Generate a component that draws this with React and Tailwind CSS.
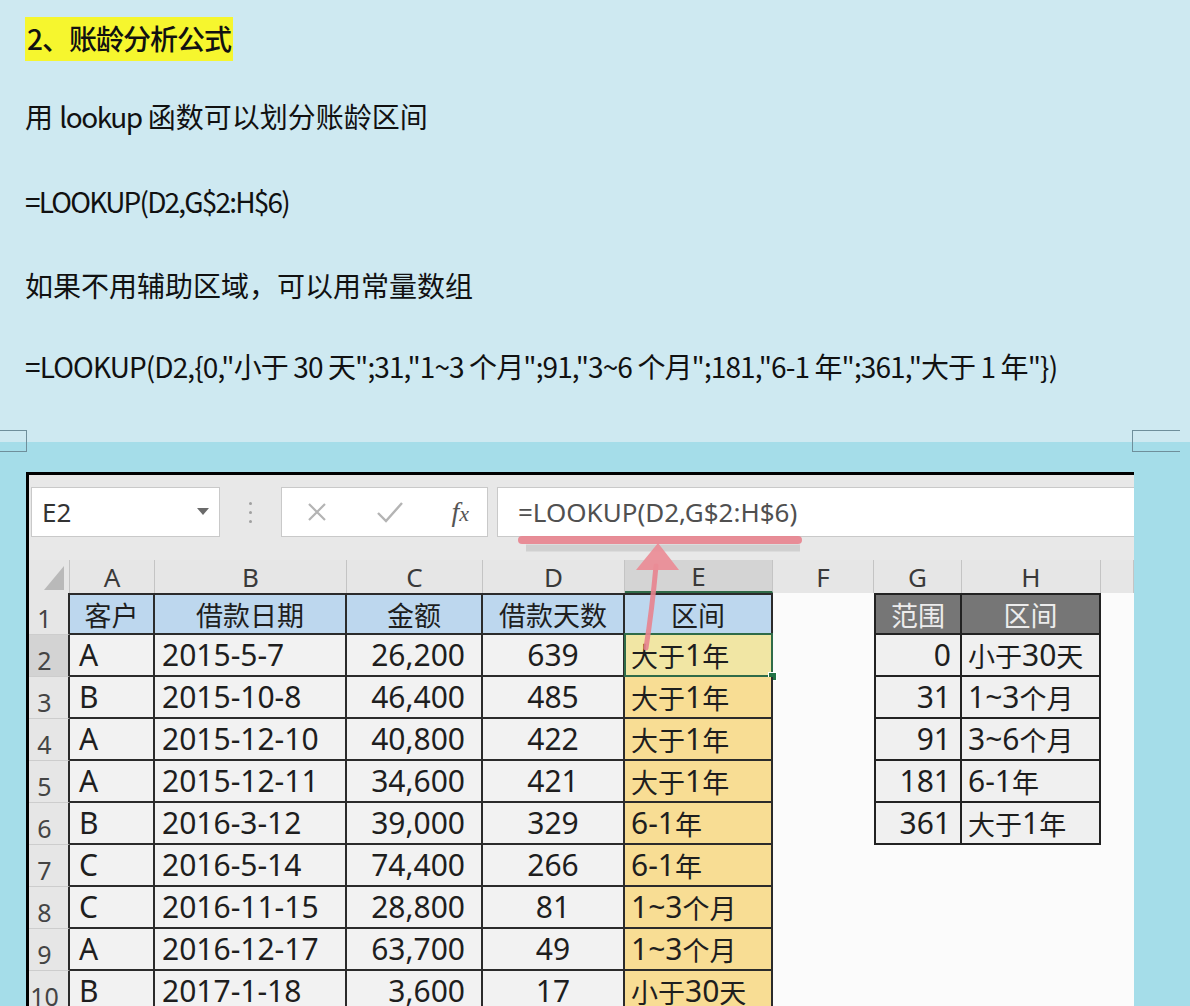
import React from "react";

const CJK = /([\u3000-\u303f\u4e00-\u9fff\uff00-\uffef]+)/;
function Mixed({ text }) {
  return String(text)
    .split(CJK)
    .map((p, i) =>
      p === "" ? null : CJK.test(p) ? (
        <span key={i} className="text-[27px] font-['Noto_Sans_CJK_SC',sans-serif]">
          {p}
        </span>
      ) : (
        <span key={i}>{p}</span>
      )
    );
}

const W = [
  "w-[41px]",
  "w-[85px]",
  "w-[192px]",
  "w-[136px]",
  "w-[142px]",
  "w-[148px]",
  "w-[101px]",
  "w-[88px]",
  "w-[139px]",
  "w-[33px]",
];

const LETTERS = ["", "A", "B", "C", "D", "E", "F", "G", "H", ""];

const DATA = [
  ["A", "2015-5-7", "26,200", "639", "大于1年"],
  ["B", "2015-10-8", "46,400", "485", "大于1年"],
  ["A", "2015-12-10", "40,800", "422", "大于1年"],
  ["A", "2015-12-11", "34,600", "421", "大于1年"],
  ["B", "2016-3-12", "39,000", "329", "6-1年"],
  ["C", "2016-5-14", "74,400", "266", "6-1年"],
  ["C", "2016-11-15", "28,800", "81", "1~3个月"],
  ["A", "2016-12-17", "63,700", "49", "1~3个月"],
  ["B", "2017-1-18", "3,600", "17", "小于30天"],
];

const RANGE = [
  ["0", "小于30天"],
  ["31", "1~3个月"],
  ["91", "3~6个月"],
  ["181", "6-1年"],
  ["361", "大于1年"],
];

const HEAD = ["客户", "借款日期", "金额", "借款天数", "区间"];

const ALIGN = [
  "",
  "justify-start pl-[9px]",
  "justify-start pl-[7px]",
  "justify-end pr-[16px]",
  "justify-center",
  "justify-start pl-[6px]",
];

function ColumnHeader() {
  return (
    <div className="flex h-[33px]">
      {LETTERS.map((l, c) => {
        if (c === 0) {
          return (
            <div key={c} className={`${W[c]} h-full relative bg-[#e6e6e6] border-r border-[#c4c4c4]`}>
              <svg className="absolute right-[5px] bottom-[3px]" width="20" height="24" viewBox="0 0 20 24">
                <polygon points="20,0 20,24 0,24" fill="#b9b9b9" />
              </svg>
            </div>
          );
        }
        const sel = c === 5;
        return (
          <div
            key={c}
            className={`${W[c]} h-full flex items-center justify-center text-[26px] leading-none text-[#3a3a3a] border-r border-[#c4c4c4] ${
              sel ? "bg-[#d4d4d4] border-b-2 border-b-[#2f6b48]" : "bg-[#e6e6e6]"
            }`}
          >
            {l}
          </div>
        );
      })}
    </div>
  );
}

function Row({ r }) {
  const cells = [];
  for (let c = 0; c < 10; c++) {
    if (c === 0) {
      cells.push(
        <div
          key={c}
          className={`${W[c]} h-full flex items-center justify-center pr-[8px] pt-[10px] text-[25px] leading-none text-[#444] border-r-2 border-r-[#2b2b2b] border-b border-b-[#cdcdcd] ${
            r === 2 ? "bg-[#d3d3d3]" : "bg-[#e6e6e6]"
          }`}
        >
          {r}
        </div>
      );
    } else if (c >= 1 && c <= 5) {
      if (r === 1) {
        cells.push(
          <div
            key={c}
            className={`${W[c]} h-full flex items-center justify-center leading-none text-[#1e1e1e] bg-[#bdd7ee] border-t-2 border-r-2 border-b-2 border-[#2b2b2b]`}
          >
            <Mixed text={HEAD[c - 1]} />
          </div>
        );
      } else {
        const v = DATA[r - 2][c - 1];
        const isE = c === 5;
        cells.push(
          <div
            key={c}
            className={`${W[c]} h-full relative flex items-center ${ALIGN[c]} leading-none text-[#1e1e1e] border-r-2 border-b-2 border-[#2b2b2b] ${
              isE ? (r === 2 ? "bg-[#f1e6a4]" : "bg-[#f8dd94]") : "bg-[#f2f2f2]"
            }`}
          >
            <Mixed text={v} />
            {isE && r === 2 && (
              <>
                <div className="absolute -left-[1px] -top-[2px] -right-[2px] -bottom-[2px] border-2 border-[#2f6b48]" />
                <div className="absolute -right-[6px] -bottom-[6px] w-[9px] h-[9px] bg-[#217346] border border-white" />
              </>
            )}
          </div>
        );
      }
    } else if ((c === 7 || c === 8) && r <= 6) {
      const left = c === 7 ? "border-l-2" : "";
      if (r === 1) {
        cells.push(
          <div
            key={c}
            className={`${W[c]} h-full flex items-center justify-center leading-none text-[#ececec] bg-[#767676] border-t-2 border-r-2 border-b-2 ${left} border-[#222]`}
          >
            <Mixed text={c === 7 ? "范围" : "区间"} />
          </div>
        );
      } else {
        const v = RANGE[r - 2][c - 7];
        cells.push(
          <div
            key={c}
            className={`${W[c]} h-full flex items-center leading-none text-[#1e1e1e] bg-[#f0f0f0] border-r-2 border-b-2 ${left} border-[#222] ${
              c === 7 ? "justify-end pr-[9px]" : "justify-start pl-[6px]"
            }`}
          >
            <Mixed text={v} />
          </div>
        );
      }
    } else {
      cells.push(<div key={c} className={`${W[c]} h-full bg-[#fbfbfb]`} />);
    }
  }
  return <div className="flex h-[42px]">{cells}</div>;
}

export default function App() {
  return (
    <div className="relative w-[1190px] h-[1006px] overflow-hidden bg-[#a5dde9]">
      {/* top text area */}
      <div className="h-[442px] bg-[#cee9f1] pl-[25px] pt-[17px] font-['Noto_Sans_CJK_SC',sans-serif] text-[28px] text-[#111]">
        <div className="h-[44px]">
          <span className="inline-block h-[44px] leading-[42px] bg-[#f6f62e] pl-[2px] pr-[2px] tracking-[-1px] font-medium">
            2、账龄分析公式
          </span>
        </div>
        <div className="mt-[35px] h-[40px] leading-[40px]">
          用 <span className="tracking-[-1.5px]">lookup</span> 函数可以划分账龄区间
        </div>
        <div className="mt-[45px] h-[40px] leading-[40px] tracking-[-1.8px]">=LOOKUP(D2,G$2:H$6)</div>
        <div className="mt-[44px] h-[40px] leading-[40px]">如果不用辅助区域，可以用常量数组</div>
        <div className="mt-[41px] h-[40px] leading-[40px] tracking-[-0.9px]">
          {'=LOOKUP(D2,{0,"小于 30 天";31,"1~3 个月";91,"3~6 个月";181,"6-1 年";361,"大于 1 年"})'}
        </div>
      </div>

      {/* page-break brackets */}
      <div className="absolute left-0 top-[430px] w-[27px] h-[22px] border-t border-r border-b border-[#6f8f9b]" />
      <div className="absolute left-[1132px] top-[430px] w-[48px] h-[22px] border-t border-l border-b border-[#6f8f9b]" />

      {/* screenshot window */}
      <div className="pl-[26px] pt-[30px]">
        <div className="w-[1108px] h-[534px] border-t-[3px] border-l-[3px] border-black bg-[#e8e8e8] font-['Noto_Sans','Noto_Sans_CJK_SC',sans-serif] text-[30px]">
          {/* formula bar */}
          <div className="h-[85px] pt-[12px] pl-[2px] flex items-start">
            <div className="w-[189px] h-[50px] bg-white border border-[#c9c9c9] flex items-center justify-between pl-[10px] pr-[10px]">
              <span className="text-[26px] leading-none text-[#333]">E2</span>
              <svg width="12" height="8" viewBox="0 0 12 8">
                <polygon points="0,0 12,0 6,7" fill="#6a6a6a" />
              </svg>
            </div>
            <div className="w-[61px] h-[50px] flex flex-col items-center justify-center gap-[6px]">
              <div className="w-[3px] h-[3px] rounded-full bg-[#a0a0a0]" />
              <div className="w-[3px] h-[3px] rounded-full bg-[#a0a0a0]" />
              <div className="w-[3px] h-[3px] rounded-full bg-[#a0a0a0]" />
            </div>
            <div className="w-[207px] h-[50px] bg-white border border-[#c9c9c9] flex items-center pl-[24px] pr-[18px] justify-between">
              <svg width="22" height="22" viewBox="0 0 22 22">
                <path d="M3 3 L19 19 M19 3 L3 19" stroke="#b4b4b4" strokeWidth="2.2" fill="none" />
              </svg>
              <svg width="28" height="24" viewBox="0 0 28 24">
                <path d="M2 13 L10 21 L26 3" stroke="#b4b4b4" strokeWidth="2.4" fill="none" />
              </svg>
              <span className="font-['Liberation_Serif',serif] italic text-[28px] leading-none text-[#555]">
                f<span className="text-[22px]">x</span>
              </span>
            </div>
            <div className="ml-[9px] flex-1 h-[50px] bg-white border-t border-b border-l border-[#c9c9c9] flex items-center pl-[20px]">
              <span className="text-[26px] leading-none text-[#505050]">=LOOKUP(D2,G$2:H$6)</span>
            </div>
          </div>

          <ColumnHeader />
          {Array.from({ length: 10 }, (_, i) => (
            <Row key={i} r={i + 1} />
          ))}
        </div>
      </div>

      {/* red annotation arrow */}
      <svg className="absolute left-0 top-0 pointer-events-none" width="1190" height="1006" viewBox="0 0 1190 1006">
        <line x1="526" y1="548" x2="800" y2="548" stroke="#888" strokeOpacity="0.25" strokeWidth="7" />
        <line x1="522" y1="540" x2="798" y2="540" stroke="#e8838e" strokeOpacity="0.9" strokeWidth="8" strokeLinecap="round" />
        <path d="M656 566 Q652 610 646 648" stroke="#e8838e" strokeOpacity="0.9" strokeWidth="5" fill="none" strokeLinecap="round" />
        <polygon points="658,543 636,570 679,570" fill="#ea8c96" fillOpacity="0.92" />
      </svg>
    </div>
  );
}
